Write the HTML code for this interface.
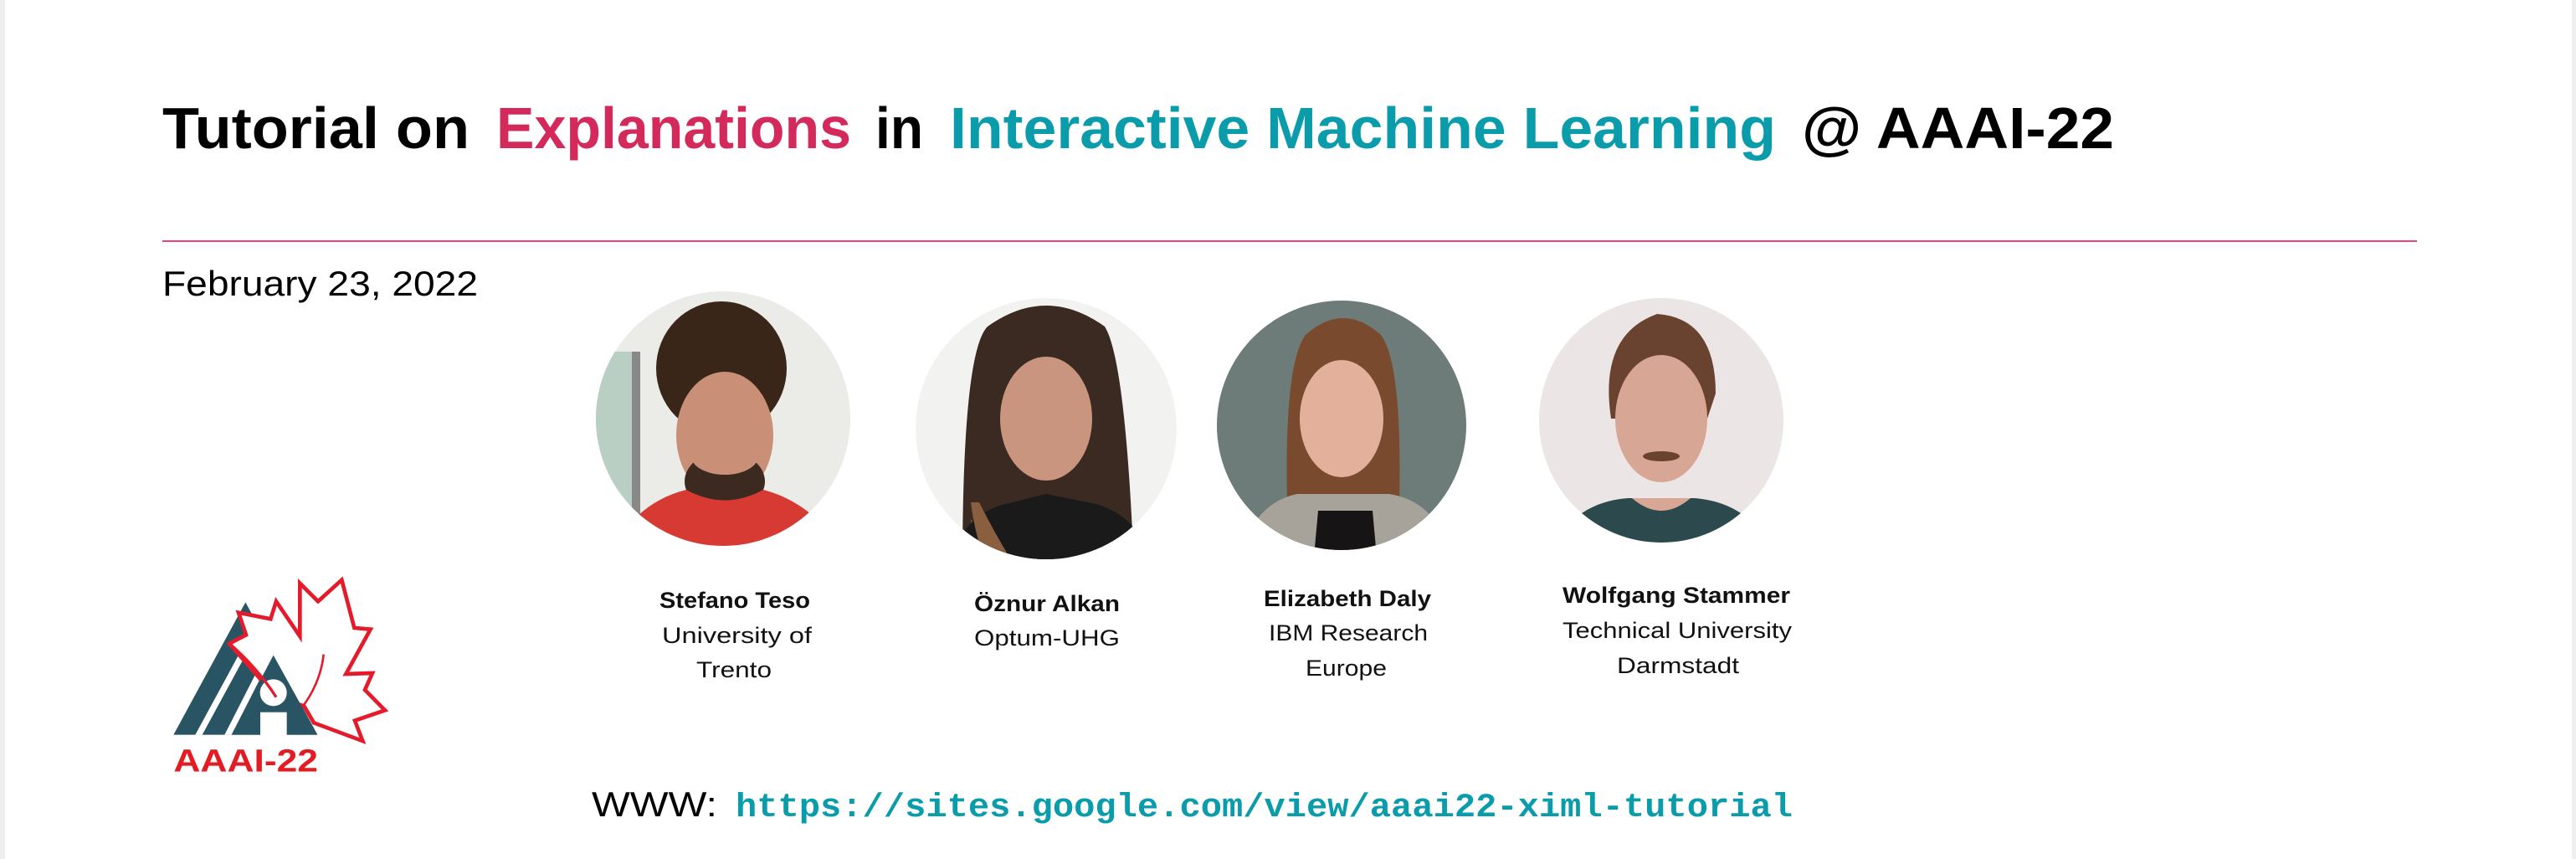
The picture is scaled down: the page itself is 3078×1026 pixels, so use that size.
<!DOCTYPE html>
<html><head><meta charset="utf-8"><style>
html,body{margin:0;padding:0;background:#fff;}
body{width:3078px;height:1026px;overflow:hidden;position:relative;}
svg{position:absolute;left:0;top:0;}
</style></head><body>
<svg width="3078" height="1026" viewBox="0 0 3078 1026" xmlns="http://www.w3.org/2000/svg">
<rect x="0" y="0" width="3078" height="1026" fill="#fff"/>
<rect x="0" y="0" width="6" height="1026" fill="#efefef"/>
<rect x="3073" y="0" width="5" height="1026" fill="#efefef"/>

<g font-family="Liberation Sans, sans-serif" font-weight="bold" font-size="70">
<text x="194" y="177" textLength="367" lengthAdjust="spacingAndGlyphs" fill="#000">Tutorial on</text>
<text x="593" y="177" textLength="424" lengthAdjust="spacingAndGlyphs" fill="#d42a5b">Explanations</text>
<text x="1046" y="177" textLength="57" lengthAdjust="spacingAndGlyphs" fill="#000">in</text>
<text x="1135" y="177" textLength="987" lengthAdjust="spacingAndGlyphs" fill="#0a9cab">Interactive Machine Learning</text>
<text x="2153" y="177" textLength="373" lengthAdjust="spacingAndGlyphs" fill="#000">@ AAAI-22</text>
</g>
<rect x="194" y="287" width="2694" height="2" fill="#e8457e"/>
<text x="194" y="353" font-family="Liberation Sans, sans-serif" font-size="42" textLength="377" lengthAdjust="spacingAndGlyphs" fill="#000">February 23, 2022</text>

<defs>
<clipPath id="c1"><circle cx="864" cy="500" r="152"/></clipPath>
<clipPath id="c2"><circle cx="1250" cy="512" r="156"/></clipPath>
<clipPath id="c3"><circle cx="1603" cy="508" r="149"/></clipPath>
<clipPath id="c4"><circle cx="1985" cy="502" r="146"/></clipPath>
</defs>
<!-- photo 1 -->
<g clip-path="url(#c1)">
<rect x="700" y="340" width="330" height="330" fill="#ebebe8"/>
<rect x="700" y="420" width="55" height="200" fill="#b9cfc4"/>
<rect x="755" y="420" width="10" height="200" fill="#888"/>
<ellipse cx="862" cy="440" rx="78" ry="80" fill="#3a2519"/>
<ellipse cx="866" cy="520" rx="58" ry="76" fill="#c99077"/>
<ellipse cx="866" cy="575" rx="48" ry="36" fill="#3c2a20"/>
<ellipse cx="866" cy="545" rx="40" ry="22" fill="#c99077"/>
<path d="M730 660 Q760 600 820 585 Q866 610 912 585 Q970 600 1010 660 Z" fill="#d63a33"/>
</g>
<!-- photo 2 -->
<g clip-path="url(#c2)">
<rect x="1090" y="350" width="330" height="330" fill="#f2f2f0"/>
<path d="M1150 680 Q1150 420 1180 390 Q1250 340 1320 390 Q1345 430 1355 680 Z" fill="#3b2a22"/>
<path d="M1160 620 Q1175 650 1200 680 L1170 680 Z" fill="#9a6e4c"/>
<ellipse cx="1250" cy="500" rx="55" ry="74" fill="#c9957f"/>
<path d="M1130 680 Q1150 610 1210 600 L1250 590 L1300 600 Q1360 610 1380 680 Z" fill="#1b1a1a"/>
<path d="M1170 600 Q1190 640 1215 680 L1180 680 Q1165 640 1160 600 Z" fill="#8a5f40"/>
</g>
<!-- photo 3 -->
<g clip-path="url(#c3)">
<rect x="1450" y="355" width="310" height="310" fill="#6d7c79"/>
<path d="M1540 660 Q1530 440 1560 400 Q1605 360 1650 400 Q1680 440 1670 660 Z" fill="#7a4a2e"/>
<ellipse cx="1603" cy="500" rx="50" ry="70" fill="#e2b09b"/>
<path d="M1480 665 Q1500 600 1550 590 L1660 590 Q1720 600 1730 665 Z" fill="#a7a39a"/>
<path d="M1570 665 L1575 610 L1640 610 L1645 665 Z" fill="#161414"/>
</g>
<!-- photo 4 -->
<g clip-path="url(#c4)">
<rect x="1835" y="350" width="300" height="300" fill="#ebe5e5"/>
<path d="M1925 500 Q1910 400 1980 375 Q2050 380 2050 470 L2040 500 Q2030 430 1985 425 Q1940 430 1930 500 Z" fill="#6a4330"/>
<ellipse cx="1985" cy="500" rx="55" ry="76" fill="#d8a695"/>
<ellipse cx="1985" cy="545" rx="22" ry="6" fill="#6a4330"/>
<path d="M1850 660 Q1880 600 1945 595 L2025 595 Q2090 600 2120 660 Z" fill="#2c4a4d"/>
<path d="M1950 595 Q1985 625 2020 595 Z" fill="#d8a695"/>
</g>

<g font-family="Liberation Sans, sans-serif" font-size="27" fill="#111" lengthAdjust="spacingAndGlyphs">
<text x="788" y="726" font-weight="bold" textLength="180" lengthAdjust="spacingAndGlyphs">Stefano Teso</text>
<text x="791" y="768" textLength="179" lengthAdjust="spacingAndGlyphs">University of</text>
<text x="832" y="809" textLength="90" lengthAdjust="spacingAndGlyphs">Trento</text>
<text x="1164" y="730" font-weight="bold" textLength="174" lengthAdjust="spacingAndGlyphs">Öznur Alkan</text>
<text x="1164" y="771" textLength="174" lengthAdjust="spacingAndGlyphs">Optum-UHG</text>
<text x="1510" y="724" font-weight="bold" textLength="200" lengthAdjust="spacingAndGlyphs">Elizabeth Daly</text>
<text x="1516" y="765" textLength="190" lengthAdjust="spacingAndGlyphs">IBM Research</text>
<text x="1560" y="807" textLength="97" lengthAdjust="spacingAndGlyphs">Europe</text>
<text x="1867" y="720" font-weight="bold" textLength="272" lengthAdjust="spacingAndGlyphs">Wolfgang Stammer</text>
<text x="1867" y="762" textLength="274" lengthAdjust="spacingAndGlyphs">Technical University</text>
<text x="1932" y="804" textLength="146" lengthAdjust="spacingAndGlyphs">Darmstadt</text>
</g>

<!-- logo -->
<svg x="150" y="650" width="350" height="300" viewBox="0 0 1050 900">
<polygon points="172,683 430,208 688,683" fill="#285463"/>
<polygon points="250,683 275,683 483,300 458,300" fill="#fff"/>
<polygon points="355,683 380,683 560,330 535,330" fill="#fff"/>
<path d="M372,356 L432,325 L405,245 L520,268 L540,205 L625,330 L625,140 L690,205 L775,128 L820,300 L878,305 L790,465 L885,462 L858,522 L930,595 L822,632 L850,705 L675,640 L640,580 L540,548 Z" fill="#fff" stroke="#e31b2a" stroke-width="14" stroke-linejoin="miter"/>
<polygon points="380,683 530,398 688,683" fill="#285463"/>
<circle cx="530" cy="532" r="48" fill="#fff"/>
<rect x="483" y="602" width="95" height="82" fill="#fff"/>
<path d="M372,356 Q470,440 540,548" fill="none" stroke="#e31b2a" stroke-width="10"/>
<path d="M710,395 Q700,490 640,575" fill="none" stroke="#e31b2a" stroke-width="8"/>
<text x="172" y="815" font-family="Liberation Sans, sans-serif" font-weight="bold" font-size="114" fill="#e31b23" textLength="518" lengthAdjust="spacingAndGlyphs">AAAI-22</text>
</svg>

<text x="707" y="975" font-family="Liberation Sans, sans-serif" font-size="42" fill="#000" textLength="150" lengthAdjust="spacingAndGlyphs">WWW:</text>
<text x="879" y="975" font-family="Liberation Mono, monospace" font-weight="bold" font-size="40" fill="#0a9cab" textLength="1263" lengthAdjust="spacingAndGlyphs">https://sites.google.com/view/aaai22-ximl-tutorial</text>
</svg>
</body></html>
